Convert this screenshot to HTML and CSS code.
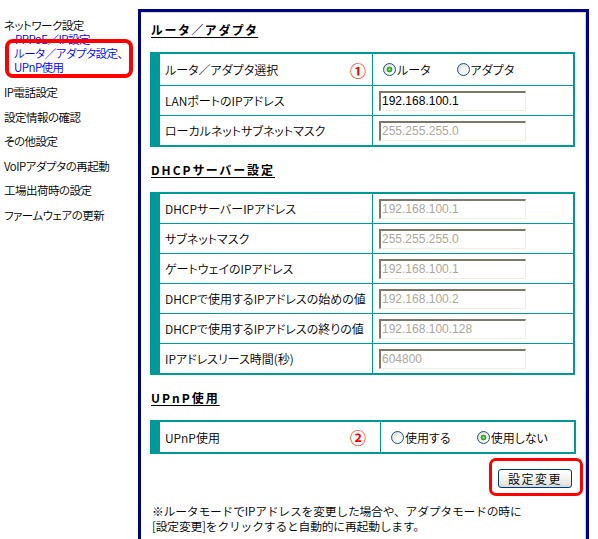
FILE: index.html
```html
<!DOCTYPE html>
<html lang="ja">
<head>
<meta charset="utf-8">
<title>ルータ／アダプタ設定</title>
<link rel="stylesheet" href="styles.css">
</head>
<body>
<div class="page">
  <nav class="nav">
    <div class="nav-group">
      <div class="nav-item">ネットワーク設定</div>
      <a class="nav-sub sub-pppoe">PPPoE／IP設定</a>
      <a class="nav-sub sub-router">ルータ／アダプタ設定、<br>UPnP使用</a>
    </div>
    <div class="nav-item nav-main">IP電話設定</div>
    <div class="nav-item nav-main">設定情報の確認</div>
    <div class="nav-item nav-main">その他設定</div>
    <div class="nav-item nav-main">VoIPアダプタの再起動</div>
    <div class="nav-item nav-main">工場出荷時の設定</div>
    <div class="nav-item nav-main">ファームウェアの更新</div>
  </nav>

  <main class="panel">
    <h2 class="heading">ルータ／アダプタ</h2>
    <div class="tbl">
      <div class="row tall">
        <div class="label"><span class="label-text">ルータ／アダプタ選択</span><span class="mark">①</span></div>
        <div class="value radios">
          <label class="opt"><input class="radio" type="radio" name="mode" checked><span>ルータ</span></label>
          <label class="opt"><input class="radio" type="radio" name="mode"><span>アダプタ</span></label>
        </div>
      </div>
      <div class="row">
        <div class="label"><span class="label-text">LANポートのIPアドレス</span></div>
        <div class="value"><input class="field" type="text" value="192.168.100.1"></div>
      </div>
      <div class="row">
        <div class="label"><span class="label-text">ローカルネットサブネットマスク</span></div>
        <div class="value"><input class="field off" type="text" value="255.255.255.0" disabled></div>
      </div>
    </div>

    <h2 class="heading next">DHCPサーバー設定</h2>
    <div class="tbl">
      <div class="row">
        <div class="label"><span class="label-text">DHCPサーバーIPアドレス</span></div>
        <div class="value"><input class="field off" type="text" value="192.168.100.1" disabled></div>
      </div>
      <div class="row">
        <div class="label"><span class="label-text">サブネットマスク</span></div>
        <div class="value"><input class="field off" type="text" value="255.255.255.0" disabled></div>
      </div>
      <div class="row">
        <div class="label"><span class="label-text">ゲートウェイのIPアドレス</span></div>
        <div class="value"><input class="field off" type="text" value="192.168.100.1" disabled></div>
      </div>
      <div class="row">
        <div class="label"><span class="label-text">DHCPで使用するIPアドレスの始めの値</span></div>
        <div class="value"><input class="field off" type="text" value="192.168.100.2" disabled></div>
      </div>
      <div class="row">
        <div class="label"><span class="label-text">DHCPで使用するIPアドレスの終りの値</span></div>
        <div class="value"><input class="field off" type="text" value="192.168.100.128" disabled></div>
      </div>
      <div class="row">
        <div class="label"><span class="label-text">IPアドレスリース時間(秒)</span></div>
        <div class="value"><input class="field off" type="text" value="604800" disabled></div>
      </div>
    </div>

    <h2 class="heading next">UPnP使用</h2>
    <div class="tbl wide">
      <div class="row upnp">
        <div class="label"><span class="label-text">UPnP使用</span><span class="mark">②</span></div>
        <div class="value radios">
          <label class="opt"><input class="radio" type="radio" name="upnp"><span>使用する</span></label>
          <label class="opt"><input class="radio" type="radio" name="upnp" checked><span>使用しない</span></label>
        </div>
      </div>
    </div>

    <div class="actions"><button class="btn" type="button">設定変更</button></div>

    <p class="note">※ルータモードでIPアドレスを変更した場合や、アダプタモードの時に<br>[設定変更]をクリックすると自動的に再起動します。</p>
  </main>

  <div class="annot annot-nav"></div>
  <div class="annot annot-btn"></div>
</div>
</body>
</html>
```

FILE: styles.css
```css
html, body {
  margin: 0;
  padding: 0;
  background: #fff;
  height: 539px;
  overflow: hidden;
}

body {
  font-family: "Noto Sans CJK JP", "Noto Sans", sans-serif;
  font-size: 12px;
  font-weight: 350;
  color: #000;
}

.page {
  position: relative;
  display: flex;
  align-items: flex-start;
  width: 598px;
}

/* left navigation */
.nav {
  width: 138px;
  box-sizing: border-box;
  padding: 18px 0 0 4px;
  font-size: 11.5px;
  line-height: 14px;
  letter-spacing: -0.5px;
  font-feature-settings: "palt";
  white-space: nowrap;
}

.nav-sub {
  display: block;
  color: #0000ff;
  text-decoration: none;
}

.sub-pppoe { padding-left: 11px; }
.sub-router { padding-left: 10px; }

.nav-main { margin-top: 10.6px; }
.nav-group + .nav-main { margin-top: 11px; }

/* main panel */
.panel {
  width: 451px;
  box-sizing: border-box;
  margin-top: 9px;
  border: 3px solid #000080;
  box-shadow: inset -1px 1px 0 #d8d6cc;
  padding: 10px 0 40px 9px;
}

.heading {
  margin: 0 0 14px 0;
  padding-left: 1px;
  height: 16px;
  line-height: 16px;
  font-size: 12px;
  font-weight: bold;
  letter-spacing: 2px;
  text-decoration: underline;
  text-underline-offset: 2px;
  font-feature-settings: "palt";
}

.heading.next { margin-top: 15px; }

.tbl {
  width: 425px;
  box-sizing: border-box;
  border: 2px solid #009999;
  border-left-width: 10px;
}

.tbl.wide { width: 426px; }

.row {
  display: flex;
  height: 29px;
  border-top: 1px solid #009999;
}

.row:first-child { border-top: 0; }
.row.tall { height: 31px; }
.row.upnp { height: 30px; }

.label {
  width: 213px;
  flex: none;
  box-sizing: border-box;
  border-right: 1px solid #009999;
  padding-left: 5px;
  display: flex;
  align-items: center;
  white-space: nowrap;
  font-feature-settings: "palt";
}

.upnp .label { width: 221px; }

.label-text {
  width: 185px;
  flex: none;
}

.mark {
  color: #ff0000;
  font-size: 16px;
  font-weight: bold;
  line-height: 1;
}

.value {
  flex: 1;
  display: flex;
  align-items: center;
  padding-left: 6px;
}

.value.radios {
  padding-left: 10px;
  gap: 26px;
  font-feature-settings: "palt";
}

.opt {
  display: inline-flex;
  align-items: center;
  gap: 1px;
}

.radio {
  -webkit-appearance: none;
  appearance: none;
  margin: 0;
  width: 13px;
  height: 13px;
  box-sizing: border-box;
  border: 1px solid #1c5180;
  border-radius: 50%;
  background: radial-gradient(circle at 65% 65%, #ffffff 0, #f1f1ec 45%, #d2d2ca 100%);
}

.radio:checked {
  background:
    radial-gradient(circle, #b8f0b0 0, #4cc043 1.2px, #1f9a1f 2.6px, rgba(31, 154, 31, 0) 3.2px),
    radial-gradient(circle at 65% 65%, #ffffff 0, #f1f1ec 45%, #d2d2ca 100%);
}

.field {
  width: 147px;
  height: 20px;
  box-sizing: border-box;
  margin: 0;
  padding: 0 0 0 1px;
  border-style: solid;
  border-width: 2px 1px 1px 2px;
  border-color: #7a776b #f1efe2 #f1efe2 #7a776b;
  background: #fff;
  font-family: "Liberation Sans", Arial, sans-serif;
  font-size: 12px;
  color: #000;
  outline: none;
}

.field.off {
  color: #aca899;
  background: #fff;
}

.actions {
  display: flex;
  justify-content: flex-end;
  margin-top: 15px;
  padding-right: 14px;
}

.btn {
  width: 74px;
  height: 19px;
  margin: 0;
  padding: 0;
  border: 1px solid #003c74;
  border-radius: 3px;
  background: linear-gradient(#ffffff 0%, #f4f4f0 45%, #e6e5dd 85%, #cfd6e8 100%);
  font-family: "Noto Sans CJK JP", "Noto Sans", sans-serif;
  font-size: 12px;
  font-weight: 350;
  line-height: 17px;
  letter-spacing: 1.5px;
  color: #000;
}

.note {
  margin: 15px 0 0 0;
  padding-left: 2px;
  font-size: 11.8px;
  line-height: 15px;
  letter-spacing: -0.2px;
  white-space: nowrap;
}

/* red annotation outlines drawn over the page */
.annot {
  position: absolute;
  box-sizing: border-box;
  border: 3px solid #ff0000;
  pointer-events: none;
}

.annot-nav {
  left: 5px;
  top: 39px;
  width: 128px;
  height: 39px;
  border-radius: 8px;
  border-width: 4px;
}

.annot-btn {
  left: 489px;
  top: 458px;
  width: 94px;
  height: 38px;
  border-radius: 7px;
}
```
